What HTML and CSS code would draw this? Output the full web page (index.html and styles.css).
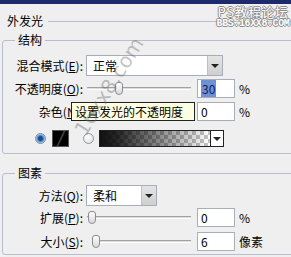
FILE: index.html
```html
<!DOCTYPE html>
<html>

<head>
    <meta charset="UTF-8">
    <title>外发光</title>
    <link rel="stylesheet" href="styles.css">
</head>

<body>
    <div class="titlebar"></div>

    <div class="watermark">
        <p class="wm-cn">PS教程论坛</p>
        <p class="wm-en">BBS.16XX8.COM</p>
    </div>

    <div class="panel">
        <div class="caption">
            <span>外发光</span>
            <i class="rule"></i>
        </div>

        <fieldset class="group group-top">
            <legend>结构</legend>

            <div class="row row-mode">
                <label class="lbl">混合模式(<u>E</u>):</label>
                <div class="select select-mode">
                    <span class="select-text">正常</span>
                    <span class="select-btn"><b class="arrow"></b></span>
                </div>
            </div>

            <div class="row row-opacity">
                <label class="lbl">不透明度(<u>O</u>):</label>
                <div class="slider">
                    <span class="track"></span>
                    <span class="thumb" style="left: 28px"></span>
                </div>
                <div class="field"><span class="sel">30</span></div>
                <span class="unit">%</span>
            </div>

            <div class="row row-noise">
                <label class="lbl">杂色(<u>N</u>):</label>
                <div class="slider"></div>
                <div class="field">0</div>
                <span class="unit">%</span>
                <div class="tooltip">设置发光的不透明度</div>
            </div>

            <div class="row row-color">
                <span class="radio checked"></span>
                <span class="swatch"></span>
                <span class="radio"></span>
                <div class="gradient">
                    <span class="gradient-fill"></span>
                    <span class="gradient-btn"><b class="arrow"></b></span>
                </div>
            </div>
        </fieldset>

        <fieldset class="group group-bottom">
            <legend>图素</legend>

            <div class="row row-method">
                <label class="lbl">方法(<u>Q</u>):</label>
                <div class="select select-method">
                    <span class="select-text">柔和</span>
                    <span class="select-btn"><b class="arrow"></b></span>
                </div>
            </div>

            <div class="row row-spread">
                <label class="lbl">扩展(<u>P</u>):</label>
                <div class="slider">
                    <span class="track"></span>
                    <span class="thumb" style="left: 1px"></span>
                </div>
                <div class="field">0</div>
                <span class="unit">%</span>
            </div>

            <div class="row row-size">
                <label class="lbl">大小(<u>S</u>):</label>
                <div class="slider">
                    <span class="track track-short"></span>
                    <span class="thumb" style="left: 5px"></span>
                </div>
                <div class="field">6</div>
                <span class="unit">像素</span>
            </div>
        </fieldset>
    </div>

    <div class="stamp">16xx8.com</div>
</body>

</html>
```

FILE: styles.css
```css
* {
    margin: 0;
    padding: 0;
    box-sizing: border-box;
}

body {
    width: 291px;
    height: 257px;
    overflow: hidden;
    background: #efefef;
    font-family: "Noto Sans CJK SC", "DejaVu Sans", sans-serif;
    font-size: 12px;
    line-height: 14px;
    color: #000;
    position: relative;
}

u {
    text-decoration: underline;
    text-underline-offset: 1px;
}

.titlebar {
    height: 4px;
    background: #1d2a6c;
}

/* corner watermark */
.watermark {
    position: absolute;
    top: 5px;
    right: 1px;
    width: 74px;
    text-align: center;
    color: #fff;
    text-shadow: 1px 0 #8a8a8a, -1px 0 #8a8a8a, 0 1px #8a8a8a, 0 -1px #8a8a8a;
}

.wm-cn {
    font-size: 13px;
    line-height: 14px;
    letter-spacing: 0.5px;
}

.wm-en {
    font-family: "Liberation Mono", monospace;
    font-size: 10px;
    line-height: 10px;
    font-weight: bold;
    letter-spacing: -0.4px;
}

.caption {
    display: flex;
    align-items: center;
    margin-top: 10px;
    padding-left: 7px;
    height: 14px;
}

.caption .rule {
    flex: 1;
    height: 1px;
    margin-left: 5px;
    background: #b8bece;
}

.group {
    border: 1px solid #b8bece;
    border-radius: 3px;
    margin: 5px -8px 0 2px;
    padding: 8px 0 6px 0;
    min-inline-size: 0;
}

.group legend {
    margin-left: 12px;
    padding: 0 3px;
    line-height: 14px;
    color: #000;
}

.group-bottom {
    margin-top: 12px;
    padding-top: 5px;
    padding-bottom: 3px;
}

.row {
    display: flex;
    align-items: center;
    position: relative;
}

.lbl {
    width: 80px;
    text-align: right;
    white-space: nowrap;
}

.row-mode {
    height: 21px;
}

.row-opacity {
    height: 19px;
    margin-top: 3px;
}

.row-noise {
    height: 19px;
    margin-top: 4px;
}

.row-color {
    height: 17px;
    margin-top: 9px;
    padding-left: 32px;
}

.row-method {
    height: 21px;
}

.row-spread {
    height: 19px;
    margin-top: 2px;
}

.row-size {
    height: 19px;
    margin-top: 5px;
}

/* drop-down list */
.select {
    display: flex;
    height: 21px;
    margin-left: 3px;
    border: 1px solid #a6adbb;
    background: #fff;
}

.select-mode {
    width: 137px;
}

.select-method {
    width: 71px;
}

.select-text {
    flex: 1;
    padding-left: 6px;
    line-height: 19px;
}

.select-btn {
    width: 15px;
    display: flex;
    align-items: center;
    justify-content: center;
    background: linear-gradient(#e4e4e4, #cfcfcf);
    border-left: 1px solid #bfbfbf;
}

.arrow {
    width: 0;
    height: 0;
    border-left: 4px solid transparent;
    border-right: 4px solid transparent;
    border-top: 4px solid #222;
}

/* slider */
.slider {
    position: relative;
    width: 104px;
    height: 19px;
    margin-left: 4px;
}

.track {
    position: absolute;
    left: 0;
    right: 0;
    top: 8px;
    height: 3px;
    border-top: 1px solid #a2a2a2;
    border-bottom: 1px solid #fff;
    background: #dcdcdc;
}

.track-short {
    left: 5px;
}

.thumb {
    position: absolute;
    top: 3px;
    width: 8px;
    height: 13px;
    border: 1px solid #8c8c8c;
    border-radius: 3px 3px 4px 4px;
    background: linear-gradient(#fdfdfd, #d9d9d9);
}

/* text box */
.field {
    width: 38px;
    height: 19px;
    margin-left: 6px;
    padding-left: 3px;
    border: 1px solid #a6adbb;
    background: #fff;
    line-height: 17px;
}

.sel {
    background: #6f90d2;
    color: #0e1d5a;
    padding: 0 1px;
}

.unit {
    margin-left: 4px;
}

.tooltip {
    position: absolute;
    left: 68px;
    top: 0;
    width: 124px;
    height: 19px;
    padding-left: 3px;
    background: #ffffe1;
    border: 1px solid #222;
    line-height: 17px;
    white-space: nowrap;
}

/* colour / gradient choice */
.radio {
    width: 11px;
    height: 11px;
    border-radius: 50%;
    border: 1px solid #8e9aa8;
    background: radial-gradient(circle at 40% 35%, #fff, #dadada);
}

.radio.checked {
    background: radial-gradient(circle, #1f4f8a 0 2px, #4f8ad0 3px, #cfe0f2 5px);
    border-color: #7a8fa8;
}

.swatch {
    width: 17px;
    height: 17px;
    margin: 0 14px 0 6px;
    border: 1px solid #555;
    background: linear-gradient(115deg, #000 45%, #4a4a4a 52%, #000 60%);
}

.gradient {
    display: flex;
    width: 125px;
    height: 17px;
    margin-left: 5px;
    border: 1px solid #222;
}

.gradient-fill {
    flex: 1;
    background:
        linear-gradient(90deg, #111, rgba(0, 0, 0, 0.85) 15%, rgba(0, 0, 0, 0) 100%),
        repeating-conic-gradient(#c4c4c4 0 25%, #fff 0 50%) 0 0 / 8px 8px;
}

.gradient-btn {
    width: 13px;
    display: flex;
    align-items: center;
    justify-content: center;
    background: #fff;
    border-left: 1px solid #222;
}

/* diagonal site stamp */
.stamp {
    position: absolute;
    z-index: 5;
    left: 24px;
    top: 78px;
    width: 100px;
    text-align: center;
    font-family: "DejaVu Sans", sans-serif;
    font-size: 20px;
    line-height: 20px;
    color: rgba(100, 100, 100, 0.4);
    transform: translate(32px, 3px) rotate(-58deg);
}
```
